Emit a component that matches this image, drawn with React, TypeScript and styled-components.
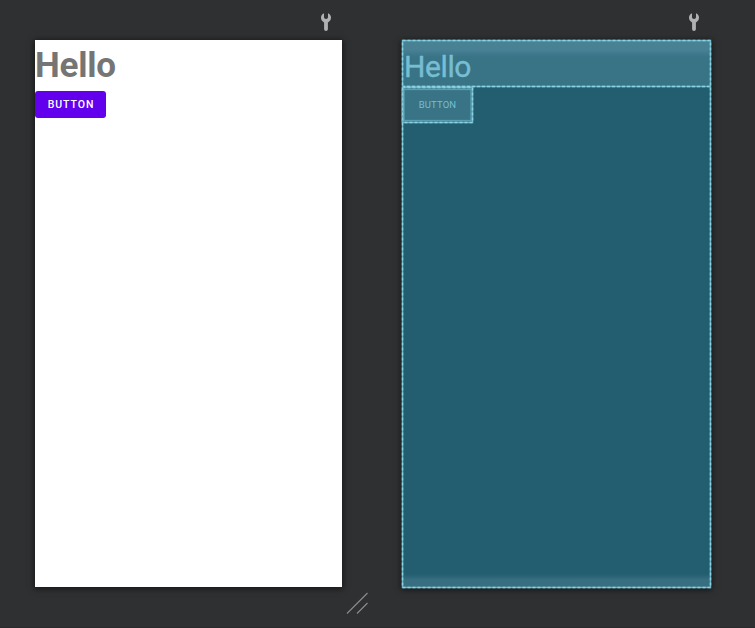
import React from "react";
import styled, { createGlobalStyle } from "styled-components";

const GlobalStyle = createGlobalStyle`
  * { box-sizing: border-box; }
  body { margin: 0; background: #2f3032; overflow: hidden; }
`;

const Editor = styled.main`
  position: relative;
  width: 755px;
  height: 628px;
  display: flex;
  gap: 60px;
  padding-left: 35px;
  background: #2f3032;
  border-bottom: 1px solid #292a2c;
  font-family: Roboto, sans-serif;
`;

const Preview = styled.section<{ $width: number }>`
  width: ${(p) => p.$width}px;
  display: flex;
  flex-direction: column;
`;

const Toolbar = styled.div<{ $right: number }>`
  height: 40px;
  flex: none;
  display: flex;
  justify-content: flex-end;
  padding: 13px ${(p) => p.$right}px 0 0;
`;

const DesignSurface = styled.div`
  height: 547px;
  background: #fff;
  box-shadow: 0 1px 6px 1px rgba(0, 0, 0, 0.55);
`;

const DesignTitle = styled.div`
  height: 51px;
  padding-top: 5px;
  font-size: 35px;
  line-height: 41px;
  font-weight: 700;
  letter-spacing: -0.2px;
  color: #757575;
`;

const DesignButton = styled.button`
  display: flex;
  align-items: center;
  justify-content: center;
  width: 71px;
  height: 27px;
  padding: 1px 0 0 1px;
  border: 0;
  border-radius: 3px;
  background: #6200ee;
  color: #fff;
  font: 500 10.5px/12px Roboto, sans-serif;
  letter-spacing: 0.95px;
`;

const Dashes = styled.svg`
  position: absolute;
  inset: 0;
  width: 100%;
  height: 100%;
  overflow: visible;
`;

const BlueprintSurface = styled.div`
  position: relative;
  height: 548px;
  background: linear-gradient(to bottom, #235d70 534px, #386f80 540px);
  box-shadow: 0 1px 6px 1px rgba(0, 0, 0, 0.55);
`;

const BlueprintTitle = styled.div`
  position: relative;
  height: 47px;
  padding: 8px 0 0 2px;
  background: linear-gradient(to bottom, #4a8295 0, #488094 10px, #387386 17px);
  font-size: 30px;
  line-height: 37px;
  letter-spacing: -0.4px;
  -webkit-text-stroke: 0.4px #77bed3;
  color: #77bed3;
`;

const BlueprintButton = styled.div`
  position: relative;
  width: 71px;
  height: 36px;
  display: flex;
  align-items: center;
  justify-content: center;
  background: #387386;
  color: #77bed3;
  font-size: 9.5px;
  line-height: 12px;
  letter-spacing: 0.15px;
`;

const Grip = styled.svg`
  position: absolute;
  left: 346px;
  top: 592px;
`;

const Wrench = () => (
  <svg width="10" height="18" viewBox="0 0 10 18">
    <path
      d="M3 .3V4.200Q3 6 5 6T7 4.200V.3C8.900 1 10 2.700 10 4.700c0 2.200-1.300 3.700-3.100 4.700V16c0 1.200-.8 1.900-1.900 1.900s-1.900-.7-1.900-1.900V9.400C1.300 8.400 0 6.900 0 4.700 0 2.700 1.100 1 3 .3Z"
      fill="#afb1b3"
    />
  </svg>
);

const Outline = ({ width, height }: { width: number; height: number }) => (
  <Dashes>
    <rect x="0.5" y="0.5" width={width - 1} height={height - 1} fill="none" stroke="#69b2c5" strokeWidth="1.5" />
    <rect
      x="0.5"
      y="0.5"
      width={width - 1}
      height={height - 1}
      fill="none"
      stroke="#8ad2e2"
      strokeWidth="1.5"
      strokeDasharray="3 2"
    />
  </Dashes>
);

export default function App() {
  return (
    <>
      <GlobalStyle />
      <Editor>
        <Preview $width={307}>
          <Toolbar $right={11}>
            <Wrench />
          </Toolbar>
          <DesignSurface>
            <DesignTitle>Hello</DesignTitle>
            <DesignButton>BUTTON</DesignButton>
          </DesignSurface>
        </Preview>
        <Preview $width={309}>
          <Toolbar $right={12}>
            <Wrench />
          </Toolbar>
          <BlueprintSurface>
            <BlueprintTitle>Hello</BlueprintTitle>
            <BlueprintButton>
              BUTTON
              <Dashes>
                <rect x="2" y="2.500" width="67" height="31" fill="none" stroke="#5b9eb2" strokeWidth="1.3" />
              </Dashes>
              <Outline width={71} height={36} />
            </BlueprintButton>
            <Dashes>
              <path d="M0 46.500H309" stroke="#69b2c5" strokeWidth="1.4" />
              <path d="M0 46.500H309" stroke="#8ad2e2" strokeWidth="1.4" strokeDasharray="3 2" />
            </Dashes>
            <Outline width={309} height={548} />
          </BlueprintSurface>
        </Preview>
        <Grip width="23" height="23" viewBox="0 0 23 23">
          <path d="M1 21.500 21.500 1M11 21.500 21.500 11" stroke="#8b8c8d" strokeWidth="1.100" />
        </Grip>
      </Editor>
    </>
  );
}
